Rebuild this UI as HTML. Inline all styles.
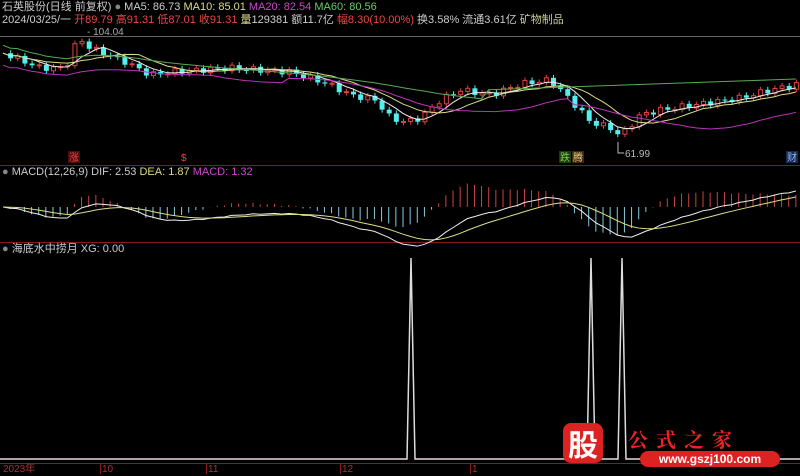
<!DOCTYPE html>
<html><head><meta charset="utf-8">
<style>
body{margin:0;background:#000;width:800px;height:474px;overflow:hidden;font-family:"Liberation Sans","Noto Sans CJK SC",sans-serif;}
.t{position:absolute;font-size:11px;white-space:nowrap;line-height:13px}
</style></head><body>
<svg id="s" width="800" height="474" style="position:absolute;left:0;top:0">
<line x1="0" y1="36.5" x2="800" y2="36.5" stroke="#666"/>
<line x1="0" y1="165.5" x2="800" y2="165.5" stroke="#8a1a1a"/>
<line x1="0" y1="242.5" x2="800" y2="242.5" stroke="#8a1a1a"/>
<line x1="0" y1="463.5" x2="800" y2="463.5" stroke="#8a1a1a"/>
<g stroke="#8a1a1a"><line x1="100.5" y1="463" x2="100.5" y2="474"/><line x1="206.5" y1="463" x2="206.5" y2="474"/><line x1="340.5" y1="463" x2="340.5" y2="474"/><line x1="470.5" y1="463" x2="470.5" y2="474"/></g>
<polyline fill="none" stroke="#ddd" stroke-width="1.5" points="0,459 407,459 411,258 415,459 587,459 591,258 595,459 618,459 622,258 626,459 800,459"/>
<g id="c"></g>
<text x="625" y="157" fill="#bbb" font-size="10" font-family="Liberation Sans">61.99</text>
<polyline fill="none" stroke="#bbb" points="618,142 618,153 624,153"/>
<rect x="68" y="151" width="12" height="12" fill="#4a0d0d"/><text x="69" y="161" fill="#e44" font-size="10">涨</text>
<text x="181" y="161" fill="#e44" font-size="10">$</text>
<rect x="559" y="151" width="12" height="12" fill="#1b3a1b"/><text x="560" y="161" fill="#8c4" font-size="10">跌</text>
<rect x="572" y="151" width="12" height="12" fill="#3a2a10"/><text x="573" y="161" fill="#ec8" font-size="10">腾</text>
<rect x="786" y="151" width="12" height="12" fill="#1a2a4a"/><text x="787" y="161" fill="#8bf" font-size="10">财</text>
</svg>
<div class="t" style="left:2px;top:1px;color:#ccc">石英股份(日线 前复权) <span style="color:#888">●</span> MA5: 86.73 <span style="color:#dd8">MA10: 85.01</span> <span style="color:#c4c">MA20: 82.54</span> <span style="color:#6c6">MA60: 80.56</span></div>
<div class="t" style="left:2px;top:14px;color:#ccc">2024/03/25/一 <span style="color:#e44">开89.79 高91.31 低87.01 收91.31</span> <span style="color:#dd8">量</span>129381 额11.7亿 <span style="color:#e44">幅8.30(10.00%)</span> 换3.58% 流通3.61亿 <span style="color:#cc9">矿物制品</span></div>
<div class="t" style="left:87px;top:26px;color:#aaa;font-size:10px">- 104.04</div>
<div class="t" style="left:2px;top:166px;color:#ccc"><span style="color:#888">●</span> MACD(12,26,9) DIF: 2.53 <span style="color:#dd8">DEA: 1.87</span> <span style="color:#c4c">MACD: 1.32</span></div>
<div class="t" style="left:2px;top:243px;color:#ccc"><span style="color:#888">●</span> 海底水中捞月 XG: 0.00</div>
<div class="t" style="left:3px;top:463px;color:#a33;font-size:10px">2023年</div>
<div class="t" style="left:102px;top:463px;color:#a33;font-size:10px">10</div>
<div class="t" style="left:208px;top:463px;color:#a33;font-size:10px">11</div>
<div class="t" style="left:342px;top:463px;color:#a33;font-size:10px">12</div>
<div class="t" style="left:472px;top:463px;color:#a33;font-size:10px">1</div>
<div style="position:absolute;left:563px;top:423px;width:40px;height:40px;background:#d22;border-radius:8px;color:#fff;font:bold 30px 'Noto Sans CJK SC',sans-serif;text-align:center;line-height:40px">股</div>
<div style="position:absolute;left:628px;top:424px;color:#e22;font:bold 20px 'Noto Serif CJK SC',serif;letter-spacing:8px">公式之家</div>
<div style="position:absolute;left:640px;top:451px;width:140px;height:16px;background:#d22;border-radius:8px;color:#fff;font:bold 12px 'Liberation Sans',sans-serif;text-align:center;line-height:16px">www.gszj100.com</div>
<script>
var A=[[0,52],[20,60],[40,68],[65,68],[78,38],[90,48],[110,56],[125,62],[150,75],[170,72],[200,70],[230,68],[260,70],[290,72],[310,78],[330,85],[350,95],[375,100],[390,118],[405,122],[420,118],[440,100],[460,90],[490,95],[520,84],[550,80],[570,100],[590,122],[610,128],[620,136],[640,115],[660,110],[700,104],[740,98],[770,90],[790,86],[800,84]];
function f(x){for(var i=1;i<A.length;i++)if(x<=A[i][0]){var a=A[i-1],b=A[i];return a[1]+(b[1]-a[1])*(x-a[0])/(b[0]-a[0]);}return 84;}
var N=112,dx=800/N,C=[],s='';
for(var i=0;i<N;i++)C.push(f(i*dx+3)+Math.sin(i*2.3)*3);
function ma(n){var r=[];for(var i=0;i<N;i++){var t=0,k=0;for(var j=Math.max(0,i-n+1);j<=i;j++){t+=C[j];k++;}r.push(t/k);}return r;}
function line(a,col,off){var p=[];for(var i=0;i<N;i++)p.push((i*dx+3).toFixed(1)+','+(a[i]+off).toFixed(1));s+='<polyline fill="none" stroke="'+col+'" points="'+p.join(' ')+'"/>';}
for(var i=1;i<N;i++){var o=C[i-1],c=C[i],x=i*dx+1,up=c<o,col=up?'#e04040':'#5ee';var t=Math.min(o,c),h=Math.max(1,Math.abs(c-o));
s+='<line x1="'+(x+2.5)+'" y1="'+(t-3)+'" x2="'+(x+2.5)+'" y2="'+(t+h+3)+'" stroke="'+col+'"/>';
s+=up?'<rect x="'+(x+.5)+'" y="'+t+'" width="4" height="'+h+'" fill="#000" stroke="'+col+'"/>':'<rect x="'+x+'" y="'+t+'" width="5" height="'+h+'" fill="'+col+'"/>';}
line(ma(5),'#eee',0);line(ma(10),'#dd8',0);
var m20=ma(20),m60=ma(60);for(var i=0;i<N;i++){m20[i]=m20[i]+ (i<40?12:i<80?8:14);m60[i]=Math.min(m60[i],80)+ (i<N*0.6?-8+i*0.4:10-(i-67)*0.25);}
line(m20,'#b3b',0);line(m60,'#5a5',0);
var e12=C[0],e26=C[0],dea=0,D=[],E=[];
for(var i=0;i<N;i++){e12+=(C[i]-e12)*2/13;e26+=(C[i]-e26)*2/27;var d=e26-e12;dea+=(d-dea)*0.2;D.push(207-d*3);E.push(207-dea*3);
var h=(d-dea)*6,x=i*dx+3;s+='<line x1="'+x+'" y1="207" x2="'+x+'" y2="'+(207-h)+'" stroke="'+(h>0?'#c44':'#8cd')+'"/>';}
var p1=[],p2=[];for(var i=0;i<N;i++){p1.push((i*dx+3)+','+D[i]);p2.push((i*dx+3)+','+E[i]);}
s+='<polyline fill="none" stroke="#eee" points="'+p1.join(' ')+'"/><polyline fill="none" stroke="#dd8" points="'+p2.join(' ')+'"/>';
document.getElementById('c').innerHTML=s;
</script>
</body></html>
